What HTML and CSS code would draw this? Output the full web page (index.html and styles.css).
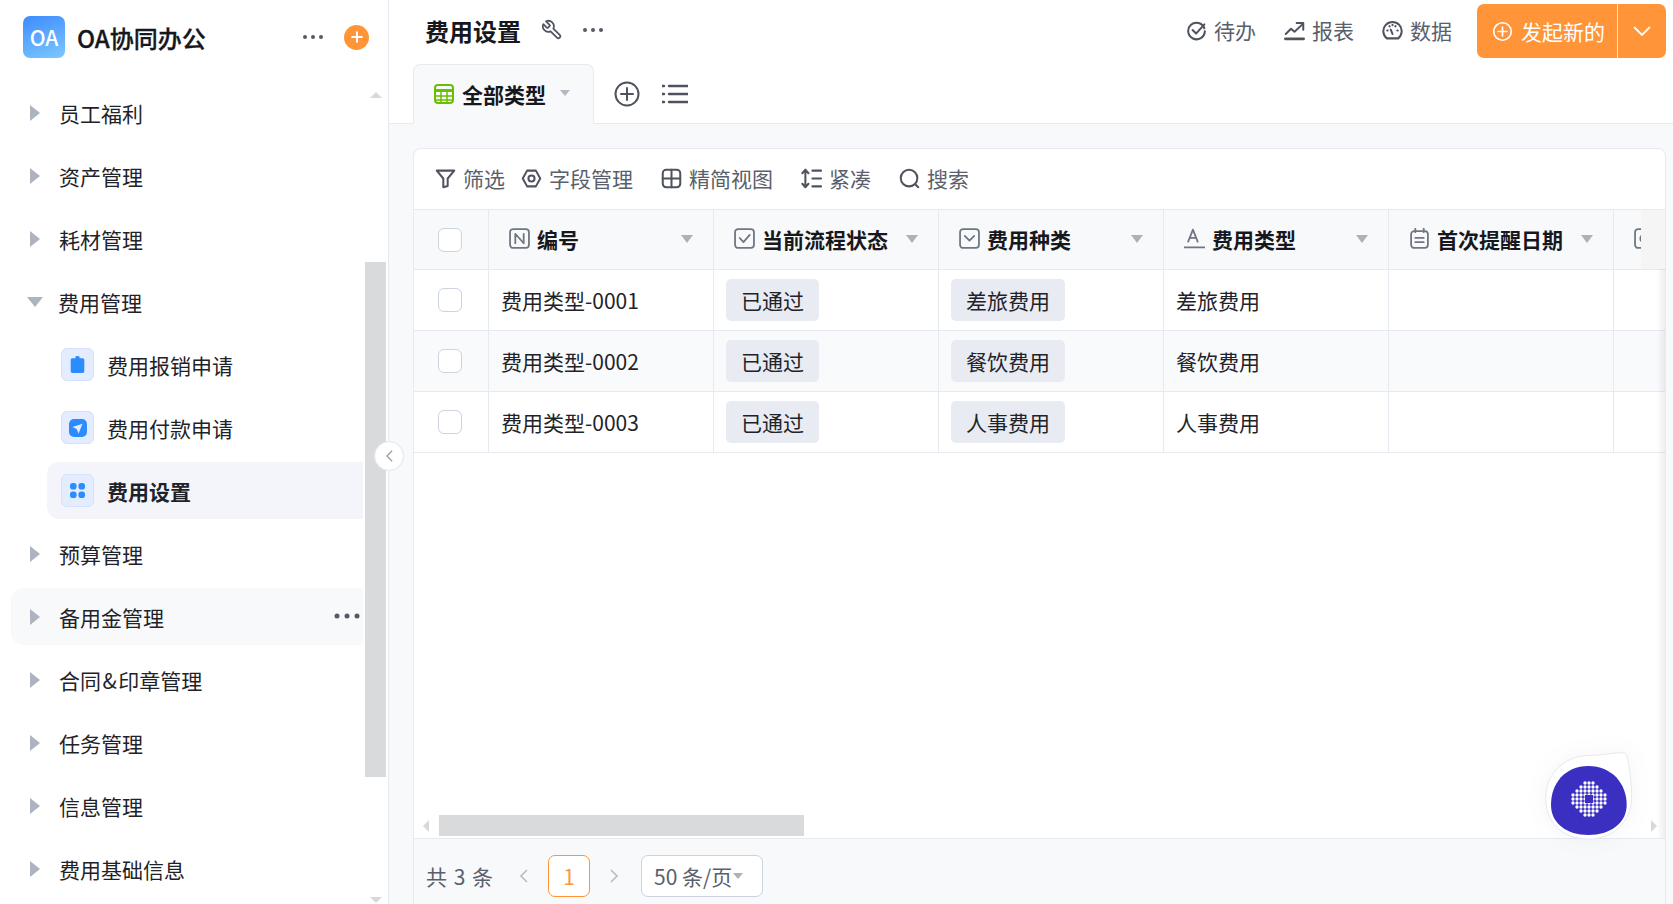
FILE: index.html
```html
<!DOCTYPE html>
<html lang="zh-CN">
<head>
<meta charset="utf-8">
<title>费用设置</title>
<link rel="stylesheet" href="styles.css">
</head>
<body>
<div class="app">
  <aside class="sidebar">
    <div class="side-head">
      <div class="logo">OA</div>
      <div class="brand">OA协同办公</div>
      <svg class="side-dots" viewBox="0 0 20 4"><circle cx="2" cy="2" r="2"/><circle cx="10" cy="2" r="2"/><circle cx="18" cy="2" r="2"/></svg>
      <div class="add-btn"><svg viewBox="0 0 12 12"><path d="M6 1.2v9.6M1.2 6h9.6"/></svg></div>
    </div>
    <nav class="menu">
      <div class="item"><i class="tri"></i><span>员工福利</span></div>
      <div class="item"><i class="tri"></i><span>资产管理</span></div>
      <div class="item"><i class="tri"></i><span>耗材管理</span></div>
      <div class="item"><i class="tri-down"></i><span>费用管理</span></div>
      <div class="item child">
        <div class="app-icon"><svg viewBox="0 0 16 20"><path d="M2 2.500h3.500V1.600a2.500 1.600 0 0 1 5 0v.9H14a2 2 0 0 1 2 2V18a2 2 0 0 1-2 2H2a2 2 0 0 1-2-2V4.500a2 2 0 0 1 2-2z"/></svg></div>
        <span>费用报销申请</span>
      </div>
      <div class="item child">
        <div class="app-icon"><svg class="svg-nav" viewBox="0 0 18 18"><path fill-rule="evenodd" d="M5 0h8a5 5 0 0 1 5 5v8a5 5 0 0 1-5 5H5a5 5 0 0 1-5-5V5a5 5 0 0 1 5-5zm-1.600 7.900l10.100-3.100-3.900 9.700-2-4.500z"/></svg></div>
        <span>费用付款申请</span>
      </div>
      <div class="item child active">
        <div class="app-icon"><svg class="svg-grid" viewBox="0 0 16 16"><rect width="7" height="7" rx="3"/><rect x="9" width="7" height="7" rx="3"/><rect y="9" width="7" height="7" rx="3"/><rect x="9" y="9" width="7" height="7" rx="3"/></svg></div>
        <span>费用设置</span>
      </div>
      <div class="item"><i class="tri"></i><span>预算管理</span></div>
      <div class="item hover"><i class="tri"></i><span>备用金管理</span>
        <svg class="row-dots" viewBox="0 0 26 6"><circle cx="3" cy="3" r="2.500"/><circle cx="13" cy="3" r="2.500"/><circle cx="23" cy="3" r="2.500"/></svg>
      </div>
      <div class="item"><i class="tri"></i><span>合同<span class="amp">&amp;</span>印章管理</span></div>
      <div class="item"><i class="tri"></i><span>任务管理</span></div>
      <div class="item"><i class="tri"></i><span>信息管理</span></div>
      <div class="item"><i class="tri"></i><span>费用基础信息</span></div>
    </nav>
    <i class="vs-up"></i>
    <div class="vs-thumb"></div>
    <i class="vs-down"></i>
    <div class="collapse"><svg viewBox="0 0 10 16"><path d="M8 2L2 8l6 6"/></svg></div>
  </aside>

  <main class="main">
    <header class="head">
      <div class="topbar">
        <h1 class="title">费用设置</h1>
        <svg class="ico wrench" viewBox="0 0 24 24"><g transform="translate(24 0) scale(-1 1)"><path d="M14.700 6.300a1 1 0 0 0 0 1.400l1.600 1.600a1 1 0 0 0 1.400 0l3.770-3.770a6 6 0 0 1-7.940 7.940l-6.910 6.910a2.120 2.120 0 0 1-3-3l6.910-6.910a6 6 0 0 1 7.940-7.940l-3.760 3.760z"/></g></svg>
        <svg class="top-dots" viewBox="0 0 20 4"><circle cx="2" cy="2" r="2"/><circle cx="10" cy="2" r="2"/><circle cx="18" cy="2" r="2"/></svg>
        <div class="top-actions">
          <div class="act"><svg class="ico" viewBox="0 0 24 24"><path d="M21 9.500A9.500 9.500 0 1 0 21.500 13"/><path d="M7.500 11.500l4 4L21 5"/></svg><span>待办</span></div>
          <div class="act"><svg class="ico" viewBox="0 0 24 24"><path d="M1.500 21.500h21" stroke-width="3"/><path d="M2 16l6-6 4 3.500L21 5"/><path d="M14.500 3.500H22V11"/></svg><span>报表</span></div>
          <div class="act"><svg class="ico" viewBox="0 0 24 24"><path d="M5.500 21a10.500 10.500 0 1 1 13 0z"/><path d="M12 16l-2-5M6 12h.5M17.500 12h.5M8.500 7l.3.4M15.500 7l-.3.4M12 5.500v.5"/></svg><span>数据</span></div>
          <div class="start">
            <div class="start-main"><svg class="ico" viewBox="0 0 24 24"><circle cx="12" cy="12" r="10"/><path d="M12 7v10M7 12h10"/></svg><span>发起新的</span></div>
            <div class="start-more"><svg viewBox="0 0 18 10"><path d="M1 1l8 8 8-8"/></svg></div>
          </div>
        </div>
      </div>
      <div class="tabs">
        <div class="tab">
          <svg class="tab-ico" viewBox="0 0 20 20"><rect x="1" y="1" width="18" height="18" rx="3"/><path d="M1 6.500h18" stroke-width="3"/><path d="M1 12h18M1 16h18M7 6v13M13 6v13" stroke-width="1.500"/></svg>
          <span>全部类型</span>
          <i class="tab-caret"></i>
        </div>
        <svg class="ico tab-add" viewBox="0 0 26 26"><circle cx="13" cy="13" r="11.500"/><path d="M13 7v12M7 13h12"/></svg>
        <svg class="ico tab-list" viewBox="0 0 26 20"><path d="M7 2h19M7 10h19M7 18h19"/><path d="M.5 2h1.500M.5 10h1.500M.5 18h1.500"/></svg>
      </div>
    </header>

    <section class="content">
      <div class="card">
        <div class="toolbar">
          <div class="tool tool-tight"><svg class="ico" viewBox="0 0 24 24"><path d="M2 3h20l-7.500 9v8.500l-5 1.500V12z"/></svg><span>筛选</span></div>
          <div class="tool"><svg class="ico" viewBox="0 0 24 24"><path d="M7 3h10l5 9-5 9H7l-5-9z"/><circle cx="12" cy="12" r="3.500"/></svg><span>字段管理</span></div>
          <div class="tool"><svg class="ico" viewBox="0 0 24 24"><rect x="2" y="2" width="20" height="20" rx="4"/><path d="M12 2v20M2 12h20"/></svg><span>精简视图</span></div>
          <div class="tool"><svg class="ico" viewBox="0 0 24 24"><path d="M5 2v20M1.500 6L5 2l3.500 4M1.500 18L5 22l3.500-4M13 3h10M13 12h10M13 21h10"/></svg><span>紧凑</span></div>
          <div class="tool"><svg class="ico" viewBox="0 0 24 24"><circle cx="11.500" cy="11.500" r="9.500"/><path d="M18.500 18.500L22 22"/></svg><span>搜索</span></div>
        </div>

        <div class="table">
          <div class="row row-head">
            <div class="cell cell-check"><i class="check"></i></div>
            <div class="cell th"><svg class="fld" viewBox="0 0 20 20"><rect x="1" y="1" width="18" height="18" rx="3"/><path d="M6 14.500v-9l8 9v-9"/></svg><b>编号</b><i class="th-caret"></i></div>
            <div class="cell th"><svg class="fld" viewBox="0 0 20 20"><rect x="1" y="1" width="18" height="18" rx="3"/><path d="M5.500 9.500l3.500 4 6-7"/></svg><b>当前流程状态</b><i class="th-caret"></i></div>
            <div class="cell th"><svg class="fld" viewBox="0 0 20 20"><rect x="1" y="1" width="18" height="18" rx="3"/><path d="M5.500 7.500L10 12l4.500-4.500"/></svg><b>费用种类</b><i class="th-caret"></i></div>
            <div class="cell th"><svg class="fld" viewBox="0 0 20 20"><path d="M4 13L8.500 1.500 13 13M5.500 9.500h6M0 18.500h20"/></svg><b>费用类型</b><i class="th-caret"></i></div>
            <div class="cell th"><svg class="fld" viewBox="0 0 20 20"><rect x="2" y="3" width="16" height="16" rx="3"/><path d="M6 .5V4M14 .5V4M6 9.500h8M6 13.500h8"/></svg><b>首次提醒日期</b><i class="th-caret"></i></div>
            <div class="cell th th-clip"><svg class="fld" viewBox="0 0 20 20"><rect x="1" y="1" width="18" height="18" rx="3"/><circle cx="10" cy="10" r="4"/></svg></div>
            <div class="cell-fill"></div>
          </div>
          <div class="row">
            <div class="cell cell-check"><i class="check"></i></div>
            <div class="cell td">费用类型-0001</div>
            <div class="cell td"><span class="tag">已通过</span></div>
            <div class="cell td"><span class="tag">差旅费用</span></div>
            <div class="cell td">差旅费用</div>
            <div class="cell td"></div>
          </div>
          <div class="row row-alt">
            <div class="cell cell-check"><i class="check"></i></div>
            <div class="cell td">费用类型-0002</div>
            <div class="cell td"><span class="tag">已通过</span></div>
            <div class="cell td"><span class="tag">餐饮费用</span></div>
            <div class="cell td">餐饮费用</div>
            <div class="cell td"></div>
          </div>
          <div class="row">
            <div class="cell cell-check"><i class="check"></i></div>
            <div class="cell td">费用类型-0003</div>
            <div class="cell td"><span class="tag">已通过</span></div>
            <div class="cell td"><span class="tag">人事费用</span></div>
            <div class="cell td">人事费用</div>
            <div class="cell td"></div>
          </div>
          <div class="hscroll">
            <i class="hs-left"></i>
            <div class="hs-thumb"></div>
            <i class="hs-right"></i>
          </div>
          <div class="edge-shadow"></div>
        </div>

        <footer class="pager">
          <span class="total">共 3 条</span>
          <svg class="pg-arrow" viewBox="0 0 8 14"><path d="M7 1L1 7l6 6"/></svg>
          <span class="page">1</span>
          <svg class="pg-arrow pg-next" viewBox="0 0 8 14"><path d="M1 1l6 6-6 6"/></svg>
          <div class="size"><span>50 条/页</span><i class="size-caret"></i></div>
        </footer>
      </div>
    </section>
  </main>

  <svg class="fab" viewBox="129 60 276 276">
    <defs>
      <pattern id="dots" width="12" height="12" patternUnits="userSpaceOnUse" x="213" y="153"><circle cx="6" cy="6" r="5" fill="#fff"/></pattern>
    </defs>
    <path class="fab-shell" d="M368 68C332 68 302 78 268 76C192 78 137 130 137 205C137 280 190 327 265 327C335 327 395 280 395 200C395 160 387 100 380 76Q377 67 368 68Z"/>
    <path class="fab-core" d="M265 108C335 108 380 160 380 225C380 280 330 315 265 315C200 315 153 280 153 225C153 160 195 108 265 108Z"/>
    <path fill="url(#dots)" fill-rule="evenodd" d="M249 153h36v12h12v12h12v12h12v36h-12v12h-12v12h-12v12h-36v-12h-12v-12h-12v-12h-12v-36h12v-12h12v-12h12zM255 195v24h24v-24z"/>
  </svg>
</div>
</body>
</html>
```

FILE: styles.css
```css
* { box-sizing: border-box; }
html, body { margin: 0; padding: 0; }
body {
  font-family: "Noto Sans CJK SC", "Noto Sans", sans-serif;
  font-size: 21px;
  color: #1f2329;
  background: #fff;
}
.app {
  position: relative;
  display: flex;
  width: 1673px;
  height: 904px;
  overflow: hidden;
}

/* Sidebar */
.sidebar {
  position: relative;
  flex: 0 0 389px;
  height: 904px;
  background: #fff;
  border-right: 1px solid #e6e8f1;
}
.side-head {
  display: flex;
  align-items: center;
  height: 74px;
  padding-left: 23px;
}
.logo {
  display: flex;
  align-items: center;
  justify-content: center;
  width: 42px;
  height: 42px;
  border-radius: 7px;
  background: linear-gradient(160deg, #3f8bff, #7bc8ff);
  color: #fff;
  font-size: 21px;
  font-weight: 500;
}
.brand {
  margin-left: 12px;
  font-size: 24px;
  font-weight: 500;
  -webkit-text-stroke: .3px #16181d;
  color: #16181d;
  white-space: nowrap;
}
.side-dots {
  width: 20px;
  height: 4px;
  margin-left: auto;
  fill: #555a64;
}
.add-btn {
  display: flex;
  align-items: center;
  justify-content: center;
  width: 25px;
  height: 25px;
  margin: 0 19px 0 21px;
  border-radius: 50%;
  background: #ff9538;
}
.add-btn svg {
  width: 12px;
  height: 12px;
  fill: none;
  stroke: #fff;
  stroke-width: 2;
  stroke-linecap: round;
}
.menu {
  display: flex;
  flex-direction: column;
  gap: 6px;
  padding: 10px 25px 0 11px;
}
.item {
  position: relative;
  display: flex;
  flex: 0 0 57px;
  align-items: center;
  padding-left: 19px;
  border-radius: 12px 0 0 12px;
  white-space: nowrap;
}
.amp { margin: 0 1.5px; }
.tri {
  flex: none;
  width: 0;
  height: 0;
  margin-right: 19px;
  border-top: 8.5px solid transparent;
  border-bottom: 8.5px solid transparent;
  border-left: 10px solid #adb3bf;
}
.tri-down {
  flex: none;
  width: 0;
  height: 0;
  margin: 0 15px 0 -3px;
  border-left: 8.5px solid transparent;
  border-right: 8.5px solid transparent;
  border-top: 10px solid #adb3bf;
}
.child {
  margin-left: 36px;
  padding-left: 14px;
}
.app-icon {
  display: flex;
  flex: none;
  align-items: center;
  justify-content: center;
  width: 33px;
  height: 33px;
  margin-right: 13px;
  border: 1px solid #d6e1fb;
  border-radius: 6px;
  background: #e4ecff;
}
.app-icon svg {
  width: 17px;
  height: 17px;
  fill: #2a8cff;
}
.app-icon .svg-nav { width: 18px; height: 18px; }
.app-icon .svg-grid { width: 15px; height: 15px; }
.active {
  background: #f4f5fa;
  font-weight: 700;
}
.hover { background: #f8f9fb; }
.row-dots {
  position: absolute;
  right: 3px;
  top: 25px;
  width: 26px;
  height: 6px;
  fill: #555a64;
}
.vs-thumb {
  position: absolute;
  left: 365px;
  top: 262px;
  width: 21px;
  height: 515px;
  background: #d9dadc;
}
.vs-up, .vs-down {
  position: absolute;
  left: 370px;
  width: 0;
  height: 0;
  border-left: 6px solid transparent;
  border-right: 6px solid transparent;
}
.vs-up { top: 92px; border-bottom: 6px solid #d6d8dc; }
.vs-down { top: 897px; border-top: 6px solid #d6d8dc; }
.collapse {
  position: absolute;
  left: 374px;
  top: 441px;
  z-index: 2;
  display: flex;
  align-items: center;
  justify-content: center;
  width: 30px;
  height: 30px;
  border: 1px solid #e2e5ec;
  border-radius: 50%;
  background: #fff;
}
.collapse svg {
  width: 9px;
  height: 14px;
  fill: none;
  stroke: #9aa0ab;
  stroke-width: 1.500;
}

/* Main */
.main {
  display: flex;
  flex: 1;
  flex-direction: column;
  min-width: 0;
  background: #f8f9fb;
}
.head {
  height: 124px;
  background: #fff;
  border-bottom: 1px solid #e8eaf1;
}
.topbar {
  display: flex;
  align-items: center;
  height: 64px;
  padding: 0 7px 4px 36px;
}
.title {
  margin: 0;
  font-size: 24px;
  font-weight: 700;
  color: #16181d;
}
.ico {
  flex: none;
  width: 21px;
  height: 21px;
  fill: none;
  stroke: #4e535e;
  stroke-width: 2.300;
  stroke-linecap: round;
  stroke-linejoin: round;
}
.wrench { margin-left: 20px; width: 22px; height: 22px; stroke-width: 1.900; }
.top-dots {
  width: 20px;
  height: 4px;
  margin-left: 20px;
  fill: #555a64;
}
.top-actions {
  display: flex;
  align-items: center;
  gap: 28px;
  margin-left: auto;
}
.act {
  display: flex;
  align-items: center;
  gap: 7px;
  color: #5a606b;
}
.start {
  display: flex;
  height: 54px;
  margin: 2px 0 0 -3px;
  border-radius: 7px;
  background: #ff9538;
  color: #fff;
}
.start-main {
  display: flex;
  align-items: center;
  gap: 8px;
  width: 141px;
  padding-left: 15px;
  border-right: 1px solid #ffe3c9;
}
.start-main .ico { stroke: #fff; stroke-width: 1.900; }
.start-more {
  display: flex;
  align-items: center;
  justify-content: center;
  width: 48px;
}
.start-more svg {
  width: 18px;
  height: 10px;
  fill: none;
  stroke: #fff;
  stroke-width: 1.800;
}
.tabs {
  display: flex;
  align-items: center;
  height: 60px;
  padding-left: 24px;
}
.tab {
  display: flex;
  align-items: center;
  width: 181px;
  height: 60px;
  padding: 0 0 0 20px;
  border: 1px solid #e8eaf1;
  border-bottom: 1px solid #f8f9fb;
  border-radius: 7px 7px 0 0;
  background: #f8f9fb;
  font-weight: 700;
  color: #16181d;
}
.tab-ico {
  flex: none;
  width: 20px;
  height: 20px;
  margin-right: 8px;
  fill: none;
  stroke: #69bf00;
  stroke-width: 2;
}
.tab-caret {
  width: 0;
  height: 0;
  margin: -3px 0 0 14px;
  border-left: 5px solid transparent;
  border-right: 5px solid transparent;
  border-top: 6px solid #b4b8c1;
}
.tab-add {
  width: 26px;
  height: 26px;
  margin: 0 0 0 20px;
  stroke-width: 2;
}
.tab-list {
  width: 26px;
  height: 20px;
  margin: 0 0 0 22px;
  stroke-width: 2.400;
}

.content {
  display: flex;
  flex: 1;
  min-height: 0;
  padding: 24px 7px 0 24px;
}
.card {
  display: flex;
  flex: 1;
  flex-direction: column;
  min-width: 0;
  border: 1px solid #e8eaf1;
  border-bottom: 0;
  border-radius: 8px 8px 0 0;
  background: #fff;
}
.toolbar {
  display: flex;
  flex: 0 0 60px;
  align-items: center;
  gap: 28px;
  padding: 0 0 2px 21px;
  color: #5a606b;
}
.tool {
  display: flex;
  align-items: center;
  gap: 7px;
}
.tool-tight { margin-right: -12px; }

.table {
  position: relative;
  display: flex;
  flex: 1;
  flex-direction: column;
  min-height: 0;
  overflow: hidden;
}
.row {
  display: flex;
  flex: 0 0 61px;
  border-bottom: 1px solid #e8eaf1;
}
.row-head {
  border-top: 1px solid #e8eaf1;
  flex-basis: 61px;
}
.row-alt { background: #f9fafc; }
.cell {
  display: flex;
  flex: 0 0 225px;
  align-items: center;
  border-right: 1px solid #e8eaf1;
}
.cell-check {
  flex-basis: 75px;
  justify-content: center;
  padding-right: 2px;
}
.row-head .cell { background: #f8f9fb; }
.check {
  width: 24px;
  height: 24px;
  border: 1px solid #cdd3e1;
  border-radius: 6px;
  background: #fff;
}
.th {
  gap: 7px;
  padding: 0 20px 2px;
  color: #16181d;
}
.th b { font-weight: 700; white-space: nowrap; }
.fld {
  flex: none;
  width: 21px;
  height: 21px;
  fill: none;
  stroke: #6f7683;
  stroke-width: 1.700;
  stroke-linecap: round;
  stroke-linejoin: round;
}
.th-caret {
  width: 0;
  height: 0;
  margin-left: auto;
  border-left: 6px solid transparent;
  border-right: 6px solid transparent;
  border-top: 8px solid #aeb1b8;
}
.th-clip {
  flex-basis: 27px;
  padding: 0 0 2px 20px;
  border-right: 0;
  overflow: hidden;
}
.th-clip .fld { margin-right: -14px; }
.cell-fill { flex: 1; background: #f5f5f6; }
.td {
  padding-left: 12px;
  white-space: nowrap;
}
.tag {
  display: flex;
  align-items: center;
  height: 42px;
  padding: 0 15px;
  border-radius: 5px;
  background: #e8ebf2;
}
.hscroll {
  display: flex;
  align-items: center;
  height: 21px;
  margin: auto 0 2px;
  padding-left: 9px;
}
.hs-left, .hs-right {
  width: 0;
  height: 0;
  border-top: 6px solid transparent;
  border-bottom: 6px solid transparent;
}
.hs-left { border-right: 6px solid #d6d8dc; }
.hs-right { margin: 0 8px 0 auto; border-left: 6px solid #d6d8dc; }
.hs-thumb {
  width: 365px;
  height: 21px;
  margin-left: 10px;
  background: #d9dadc;
}
.edge-shadow {
  position: absolute;
  top: 60px;
  right: 0;
  bottom: 0;
  width: 8px;
  background: linear-gradient(to right, rgba(60, 60, 80, 0), rgba(60, 60, 80, .09));
}

.pager {
  display: flex;
  flex: 0 0 66px;
  align-items: center;
  padding: 16px 0 7px 12px;
  border-top: 1px solid #e8eaf1;
  background: #f8f9fb;
  color: #5a606b;
}
.total { width: 65px; white-space: nowrap; word-spacing: 2px; }
.pg-arrow {
  flex: none;
  width: 8px;
  height: 14px;
  margin-left: 29px;
  fill: none;
  stroke: #b9bdc7;
  stroke-width: 1.600;
}
.pg-next { margin-left: 20px; }
.page {
  display: flex;
  align-items: center;
  justify-content: center;
  width: 42px;
  height: 42px;
  margin-left: 20px;
  border: 1px solid #ff9538;
  border-radius: 7px;
  background: #fff;
  color: #ff9538;
}
.size {
  display: flex;
  align-items: center;
  width: 122px;
  height: 42px;
  margin-left: 23px;
  padding-left: 12px;
  border: 1px solid #ccd2e0;
  border-radius: 7px;
  background: #fff;
  white-space: nowrap;
}
.size-caret {
  width: 0;
  height: 0;
  margin-left: 1px;
  border-left: 5px solid transparent;
  border-right: 5px solid transparent;
  border-top: 6px solid #aeb1b8;
}

.fab {
  position: absolute;
  right: 38px;
  bottom: 62px;
  width: 92px;
  height: 92px;
  filter: drop-shadow(0 0 10px rgba(70, 70, 110, .06));
}
.fab-shell { fill: #fff; stroke: #e6e8f0; stroke-width: 3; }
.fab-core { fill: #3a2fc0; }
```
